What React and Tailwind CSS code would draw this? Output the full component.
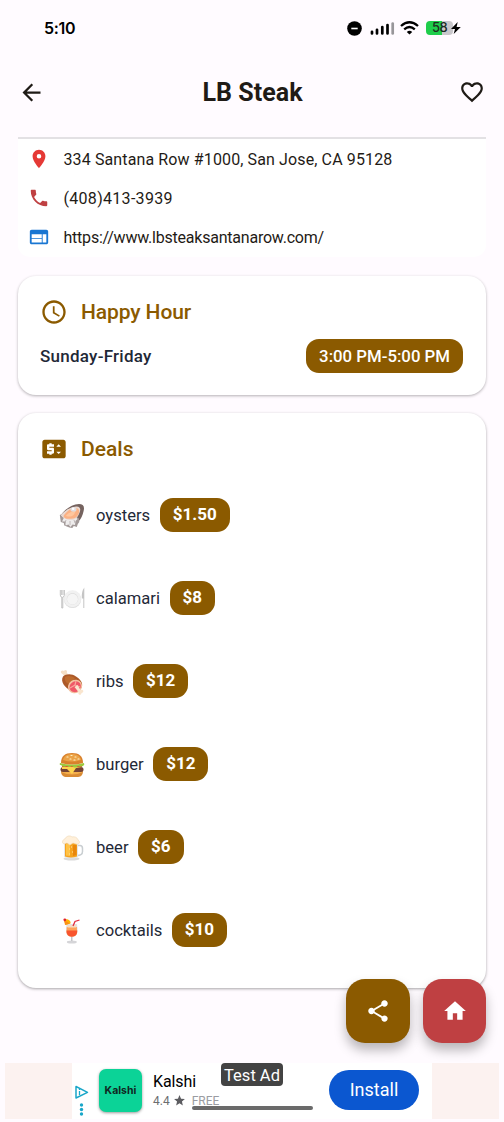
import React from "react";
import {
  MdArrowBack,
  MdFavoriteBorder,
  MdLocationOn,
  MdPhone,
  MdWeb,
  MdAccessTime,
  MdPriceChange,
  MdShare,
  MdHome,
  MdStar,
} from "react-icons/md";

function Oyster() {
  return (
    <svg width="26" height="26" viewBox="0 0 26 26">
      <path d="M2 12C6 6 13 1.500 20 1c4 0 6 2 4.500 7.500C23.500 13 22 16 19 19l-6 2z" fill="#75635f" />
      <path d="M.800 12l4-2 15 5 .5 4-1.500 2-1 3-3-1-1.500 2-3-.5-2.500-1-2.500-1-.5-2.500-3-1z" fill="#a39a99" />
      <path d="M2 12.500l3 2-2 4 3.500 0 0 4 3-1 2 2.500 2-2.500 2.500.5.5-4 2-2-4-4-10-2z" fill="#eeecec" />
      <path d="M7 17l-1 3M11 18v4M15 17l1 3" stroke="#b5adad" strokeWidth=".8" fill="none" />
      <path d="M2 12C6 7.500 11 4 17 3.500c5-.5 5 4 3 7.500-2 4-4 6-8 6S4 15.500 2 12z" fill="#ead9d1" />
      <path d="M4.500 13c2-3 6-8 11.500-8 5 0 5 4 3 7s-4 4-8 3.800c-3 0-6 0-6.500-2.800z" fill="#fbb184" />
      <path d="M7 12.500c3-3 6-4 9.500-4.500-1 4-3 5.500-6 5.500-2 0-3 0-3.500-1z" fill="#ffc79e" />
      <ellipse cx="14.500" cy="6.500" rx="3" ry="2.200" fill="#e0dde0" />
      <circle cx="14.200" cy="5.800" r="1.300" fill="#fff" />
    </svg>
  );
}

function Plate() {
  return (
    <svg width="26" height="26" viewBox="0 0 26 26">
      <path d="M1.300 4v5q0 2 1.500 2v11h1V11q1.600 0 1.600-2V4M2.700 4v5M4 4v5" fill="none" stroke="#bcbcbc" strokeWidth=".9" />
      <path d="M25.300 1.500q-3 4-2.500 11h1.500V22h1z" fill="#c5c5c5" />
      <circle cx="13.500" cy="13.300" r="8.600" fill="#dcdcdc" />
      <circle cx="13.500" cy="12.800" r="8.500" fill="#f1f1f1" />
      <circle cx="13.500" cy="12.900" r="5.800" fill="#dedede" />
      <circle cx="13.500" cy="13.200" r="5.400" fill="#f5f5f5" />
    </svg>
  );
}

function Ribs() {
  return (
    <svg width="26" height="26" viewBox="0 0 26 26">
      <path d="M4 5.500L2.200 4c-1.500-2 1.500-3.500 2.800-2 1-2 4-.5 2.800 1.500L10 7 6.500 9z" fill="#f5dfc5" />
      <path d="M4 7.500c3-3 9-3 13 0 4 2.500 7 6 6 10s-7 6-11 4C6 19 1 12.500 4 7.500z" fill="#ac5928" />
      <path d="M6 8c3-2 7-1 10 1l-5 7C7 14 5 11 6 8z" fill="#bd6b2e" />
      <ellipse cx="16" cy="17.500" rx="7.200" ry="6.600" transform="rotate(-35 16 17.500)" fill="#f4c3a1" />
      <ellipse cx="16.200" cy="17.700" rx="5.900" ry="5.200" transform="rotate(-35 16.200 17.700)" fill="#ef5867" />
      <path d="M11 19l5-3 1-4M16 16l5 2" stroke="#f9a49a" strokeWidth="1.200" fill="none" />
      <path d="M15.500 18l3-2 3 5c3-1 4 2 1 3 0 3-4 2-3-1z" fill="#f9e5ce" />
    </svg>
  );
}

function Burger() {
  return (
    <svg width="26" height="26" viewBox="0 0 26 26">
      <path d="M2 19h22c0 5-3 6-6 6H8c-4 0-6-2-6-6z" fill="#d98a33" />
      <path d="M2 17q11 5 22 0v3q-11 5-22 0z" fill="#f3ae4c" />
      <rect x="1.500" y="15" width="23" height="5" rx="2.500" fill="#754335" />
      <path d="M3 15h20l-6 1-4 6-5-5-5 0z" fill="#ffd34c" />
      <path d="M3 13h20v2H3z" fill="#e74832" />
      <path d="M1 11q12 3 24 0 1 2-1 3-3 1-5 0-3 3-6 0-3 2-5 0-4 2-6-1-2 0-1-2z" fill="#9aca3c" />
      <path d="M2 11C2 4 6 1 13 1s11 3 11 10q-11 3-22 0z" fill="#d9812c" />
      <path d="M4 8C5 4 8 2 13 2s8 2 9 6q-9 3-18 0z" fill="#eba347" />
      <path d="M8 5h1M12 3.500h1M16 5h1M11 7h1M15 8h1M19 7h1" stroke="#fff1c8" strokeWidth="1.200" strokeLinecap="round" />
    </svg>
  );
}

function Beer() {
  return (
    <svg width="26" height="26" viewBox="0 0 26 26">
      <ellipse cx="12.500" cy="23.800" rx="8" ry="1.700" fill="#dadada" />
      <path d="M18 10.500h3q2.500 0 2.500 3v3q0 4-5.500 4" fill="none" stroke="#c9ced1" strokeWidth="1.500" />
      <path d="M5 6h14v16q-7 3-14 0z" fill="#e4e6e6" />
      <path d="M6 8h12v13.500q-6 2-12 0z" fill="#f6a31e" />
      <path d="M7 9h4v12l-4-.5z" fill="#ffc245" />
      <path d="M14 10h3.500v10l-3.500 1z" fill="#e8860c" />
      <path d="M5 9C2 8 4 4 6 4c1-3 5-4 7-2 4-1 6 2 6 3 3 2 1 5-2 4l-3-1-3 2-3-2z" fill="#fff0da" stroke="#efd6b4" strokeWidth=".6" />
      <path d="M10 14h1M13 17h1M12 12h1M10 19h1" stroke="#ffe3a1" />
    </svg>
  );
}

function Cocktail() {
  return (
    <svg width="26" height="26" viewBox="0 0 26 26">
      <ellipse cx="12.800" cy="24" rx="5" ry="1.500" fill="#d5d5d8" />
      <path d="M12 18h1.500v5H12z" fill="#c4c4c8" />
      <path d="M7.500 6h10.500q1 5 .2 9c-.7 5-10 5-10.900 0q-.8-4 .2-9z" fill="#e2e2e4" />
      <path d="M7.800 9h10l.4 5q-.3 4.500-5.300 4.500T7.500 14z" fill="#ffa35a" />
      <path d="M7.500 12.500h10.800q.2 6-5.500 6.200Q7.200 18.500 7.500 12.500z" fill="#f8552e" />
      <path d="M8.500 7h8.500v2.500H8.500z" fill="#f5dcc2" />
      <path d="M14 8l2-4.500 4.500-1.500" fill="none" stroke="#e22e3f" strokeWidth="1.300" />
      <path d="M5 1.500c4-1 7 1 6.500 4l-5 1.500z" fill="#ffb300" />
      <path d="M5 2l1 5 5-1.500z" fill="#f98f16" />
      <circle cx="5.800" cy="1.800" r="1.400" fill="#df1e2e" />
    </svg>
  );
}

const contacts = [
  { Icon: MdLocationOn, color: "text-[#e53935]", tracking: "tracking-[0.12px]", text: "334 Santana Row #1000, San Jose, CA 95128" },
  { Icon: MdPhone, color: "text-[#bf4042]", tracking: "tracking-[0.3px]", text: "(408)413-3939" },
  { Icon: MdWeb, color: "text-[#1976d2]", tracking: "tracking-[-0.22px]", text: "https://www.lbsteaksantanarow.com/" },
];

const deals = [
  { Icon: Oyster, name: "oysters", price: "$1.50" },
  { Icon: Plate, name: "calamari", price: "$8" },
  { Icon: Ribs, name: "ribs", price: "$12" },
  { Icon: Burger, name: "burger", price: "$12" },
  { Icon: Beer, name: "beer", price: "$6" },
  { Icon: Cocktail, name: "cocktails", price: "$10" },
];

function StatusBar() {
  return (
    <div className="flex h-14 items-center justify-between pr-[43px] pl-[44px] text-black">
      <span className="font-[Inter,sans-serif] text-[16px] font-semibold tracking-[-0.3px]">5:10</span>
      <div className="flex items-center">
        <svg width="15" height="15" viewBox="0 0 15 15">
          <circle cx="7.500" cy="7.500" r="7.300" />
          <path d="M4.300 7.500h6.400" stroke="#fff" strokeWidth="1.600" />
        </svg>
        <svg className="ml-[8px]" width="25" height="14" viewBox="0 0 25 14" strokeWidth="2.700" strokeLinecap="round">
          <path d="M2 10.800v1.700M7 8.800v3.700M12.300 6v6.500M17.500 4v8.500" stroke="#000" />
          <path d="M22.700 2.500v10" stroke="#98969a" />
        </svg>
        <svg className="ml-[5px]" width="19" height="14" viewBox="0 0 19 14" fill="none" stroke="#000" strokeWidth="2.300">
          <path d="M1 5Q9.500-2.600 18 5M4.200 8.300q5.300-4.600 10.600 0" />
          <path d="M9.500 13.600L6.800 11q2.700-2.400 5.400 0z" fill="#000" stroke="none" />
        </svg>
        <span className="ml-[7px] flex h-[14px] w-[27px] items-center justify-center rounded-[4px] bg-linear-to-r from-[#1fcd4b] from-60% to-[#c9c7cb] to-60% font-[Inter,sans-serif] text-[13px] font-medium tracking-[-0.5px] text-[#202b21]">
          58
        </span>
        <svg className="-ml-[2px]" width="10" height="12" viewBox="0 0 10 12">
          <path d="M6.700 0L0 7h4L2.700 12 9.800 5H5.600z" />
        </svg>
      </div>
    </div>
  );
}

function Pill({ children, className = "" }) {
  return (
    <span className={`flex h-[34px] items-center rounded-[13px] bg-[#8b5a00] px-[13px] text-white ${className}`}>
      {children}
    </span>
  );
}

function AdBanner() {
  return (
    <div className="relative mx-[5px] mt-[75px] flex h-[56px] bg-[#fcf2f0]">
      <div className="ml-[67px] flex w-[360px] bg-white">
        <svg className="mt-[22px] ml-[3px]" width="14" height="32" viewBox="0 0 14 32" fill="none">
          <path d="M1 1.500v11.500L12.500 7.300z" stroke="#1aa7c9" strokeWidth="1.500" strokeLinejoin="round" />
          <path d="M4.500 4v1M4.500 6v4" stroke="#1aa7c9" strokeWidth="1.300" />
          <g fill="#1aa7c9">
            <circle cx="6.500" cy="20" r="1.700" />
            <circle cx="6.500" cy="24.500" r="1.700" />
            <circle cx="6.500" cy="29" r="1.700" />
          </g>
        </svg>
        <div className="mt-[6px] ml-[10px] flex h-[43px] w-[43px] items-center justify-center rounded-[7px] bg-[#0bd397] font-[Inter,sans-serif] text-[10.500px] font-bold text-[#10261f] shadow-[0_1px_3px_rgba(0,0,0,0.4)]">
          Kalshi
        </div>
        <div className="mt-[8px] ml-[11px]">
          <div className="text-[16px] leading-[22px] tracking-[-0.1px] text-black">Kalshi</div>
          <div className="flex h-[15px] items-center text-[12px] text-[#6d6d70]">
            <span>4.4</span>
            <MdStar className="ml-[3px] size-[13px] text-[#5c5c60]" />
            <span className="ml-[6px] text-[#9a9ca2]">FREE</span>
          </div>
        </div>
        <button className="mt-[7px] mr-[13px] ml-auto h-[40px] w-[90px] rounded-full bg-[#0b57d0] pb-[2px] text-[18px] text-white">
          Install
        </button>
      </div>
      <div className="absolute top-0 left-[216px] flex h-[23px] w-[62px] items-center justify-center rounded-[4px] bg-[#434343] pt-[3px] text-[16.500px] whitespace-nowrap text-white">
        Test Ad
      </div>
      <div className="absolute top-[43px] left-[187px] h-[4px] w-[121px] rounded-full bg-[#6a6a6a]" />
    </div>
  );
}

export default function App() {
  return (
    <div className="relative h-[1122px] w-[504px] overflow-hidden bg-[#fffbff] font-[Roboto,sans-serif] text-[#1f1b16]">
      <StatusBar />
      <header className="flex h-[73px] items-center justify-between pr-[19px] pl-[18px]">
        <MdArrowBack className="mb-[1px] size-[27px]" />
        <h1 className="ml-[1px] text-[25px] font-bold tracking-[0.05px]">LB Steak</h1>
        <MdFavoriteBorder className="mb-[1px] size-[26px]" />
      </header>
      <section className="mx-[18px] mt-[8px] h-[120px] rounded-b-[12px] border-t-2 border-[#e3e1e4] bg-white">
        {contacts.map(({ Icon, color, tracking, text }) => (
          <div key={text} className="flex h-[39px] items-center pt-[1px] pl-[10px]">
            <Icon className={`size-[22px] ${color}`} />
            <span className={`mt-[2px] ml-[13.500px] text-[16px] ${tracking}`}>{text}</span>
          </div>
        ))}
      </section>
      <section className="mx-[18px] mt-[19px] h-[119px] rounded-[18px] bg-white px-[23px] pt-[22px] shadow-[0_1px_3px_rgba(0,0,0,0.3)]">
        <h2 className="flex h-[28px] items-center text-[21px] font-medium text-[#8b5a00]">
          <MdAccessTime className="-ml-[1px] size-[28px]" />
          <span className="mt-[2px] ml-[13px] tracking-[-0.1px]">Happy Hour</span>
        </h2>
        <div className="mt-[13px] flex items-center justify-between text-[#1f2937]">
          <span className="-ml-[1px] pt-[1px] text-[17px] font-medium tracking-[0.25px]">Sunday-Friday</span>
          <Pill className="pt-[1px] text-[16.800px] font-medium">3:00 PM-5:00 PM</Pill>
        </div>
      </section>
      <section className="mx-[18px] mt-[18px] h-[575px] rounded-[18px] bg-white px-[23px] pt-[22px] shadow-[0_1px_3px_rgba(0,0,0,0.35)]">
        <h2 className="flex h-[28px] items-center text-[21px] font-medium text-[#8b5a00]">
          <MdPriceChange className="-ml-[1px] size-[28px]" />
          <span className="mt-[2px] ml-[13px]">Deals</span>
        </h2>
        <ul className="mt-[10px]">
          {deals.map(({ Icon, name, price }) => (
            <li key={name} className="flex h-[83px] items-center pl-[18px]">
              <span className="pt-[2px]">
                <Icon />
              </span>
              <span className="ml-[11px] pt-[3px] text-[16.600px] text-[#1f2937]">{name}</span>
              <Pill className="ml-[9.500px] pt-[1px] text-[17px] font-bold">{price}</Pill>
            </li>
          ))}
        </ul>
      </section>
      <AdBanner />
      <div className="absolute top-[979px] right-[18px] flex gap-[13px] text-white">
        <button className="flex size-[64px] items-center justify-center rounded-[19px] bg-[#8b5a00] shadow-[0_7px_12px_rgba(0,0,0,0.28)]">
          <MdShare className="size-[26px]" />
        </button>
        <button className="flex h-[64px] w-[63px] items-center justify-center rounded-[19px] bg-[#bf4042] shadow-[0_7px_12px_rgba(0,0,0,0.28)]">
          <MdHome className="size-[26px]" />
        </button>
      </div>
    </div>
  );
}
